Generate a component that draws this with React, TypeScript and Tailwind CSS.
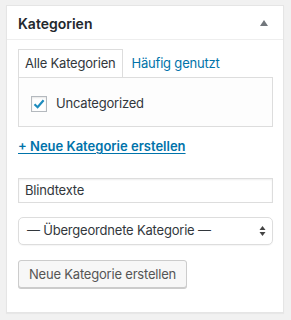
export default function App() {
  return (
    <div className="min-h-screen w-[291px] h-[320px] bg-[#f1f1f1] pt-[5px] pl-[6px] font-['Inter','Noto_Sans',sans-serif] text-[13px] text-[#32373c]">
      <div className="w-[278px] h-[308px] bg-white border border-[#e5e5e5] shadow-[0_1px_1px_rgba(0,0,0,0.04)]">
        {/* Header */}
        <div className="h-[34px] flex items-center justify-between pl-[11px] pr-[12px] border-b border-[#eeeeee]">
          <h2 className="text-[14px] font-semibold text-[#23282d] leading-none pt-[2px]">Kategorien</h2>
          <svg width="10" height="8" viewBox="0 0 10 8" className="mr-[2px]">
            <path d="M5 1 L9 7 L1 7 Z" fill="#72777c" />
          </svg>
        </div>

        <div className="px-[11px] pt-[10px] tracking-[-0.2px]">
          {/* Tabs */}
          <div className="flex items-end h-[27px]">
            <div className="h-[28px] pl-[6px] pr-[6px] border border-[#dddddd] border-b-0 bg-white flex items-center relative z-10 text-[#32373c]">
              Alle Kategorien
            </div>
            <div className="h-[27px] px-[9px] flex items-center text-[#0073aa]">Häufig genutzt</div>
          </div>
          <div className="h-[50px] w-[255px] border border-[#dddddd] bg-[#fdfdfd] pl-[12px] pt-[16px]">
            <label className="flex items-center gap-[9px]">
              <span className="w-[16px] h-[16px] border border-[#b4b9be] bg-white flex items-center justify-center shadow-[inset_0_1px_2px_rgba(0,0,0,0.1)]">
                <svg width="14" height="14" viewBox="0 0 14 14">
                  <path d="M2.5 7.2 L5.6 10.2 L11.6 3.2" stroke="#1e8cbe" strokeWidth="2.2" fill="none" />
                </svg>
              </span>
              <span>Uncategorized</span>
            </label>
          </div>

          {/* Add link */}
          <div className="mt-[12px] h-[16px] flex items-center tracking-normal">
            <a className="font-semibold text-[#0073aa] underline underline-offset-[2px] text-[13px]">
              + Neue Kategorie erstellen
            </a>
          </div>

          {/* Input */}
          <div className="mt-[23px] w-[255px] h-[25px] border border-[#dddddd] bg-white shadow-[inset_0_1px_2px_rgba(0,0,0,0.07)] flex items-center pl-[6px] text-[#32373c]">
            Blindtexte
          </div>

          {/* Select */}
          <div className="mt-[14px] w-[255px] h-[28px] border border-[#dddddd] rounded-[5px] bg-white flex items-center justify-between pl-[8px] pr-[6px] shadow-[0_1px_1px_rgba(0,0,0,0.04)]">
            <span>— Übergeordnete Kategorie —</span>
            <svg width="7" height="12" viewBox="0 0 7 12">
              <path d="M3.5 1 L6.5 5 L0.5 5 Z" fill="#444" />
              <path d="M3.5 11 L6.5 7 L0.5 7 Z" fill="#444" />
            </svg>
          </div>

          {/* Button */}
          <button className="mt-[15px] h-[28px] px-[10px] bg-[#f7f7f7] border border-[#cccccc] rounded-[3px] shadow-[0_1px_0_#cccccc] text-[#555555] text-[13px] leading-none tracking-[-0.2px]">
            Neue Kategorie erstellen
          </button>
        </div>
      </div>
    </div>
  )
}
